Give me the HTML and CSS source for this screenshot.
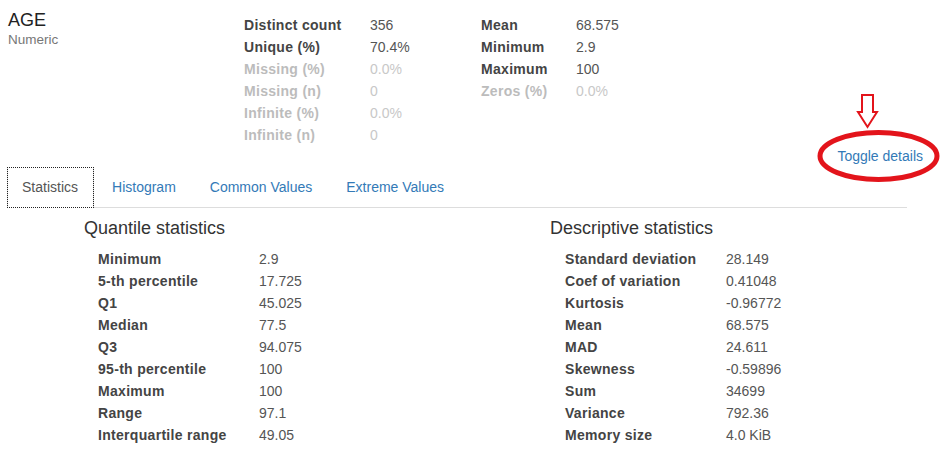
FILE: index.html
```html
<!DOCTYPE html>
<html>
<head>
<meta charset="utf-8">
<link rel="stylesheet" href="styles.css">
</head>
<body>
<div class="page">
  <div class="header">
    <div class="title">
      <div class="name">AGE</div>
      <div class="type">Numeric</div>
    </div>
    <table class="stats stats-a">
      <tr><th>Distinct count</th><td>356</td></tr>
      <tr><th>Unique (%)</th><td>70.4%</td></tr>
      <tr class="ignore"><th>Missing (%)</th><td>0.0%</td></tr>
      <tr class="ignore"><th>Missing (n)</th><td>0</td></tr>
      <tr class="ignore"><th>Infinite (%)</th><td>0.0%</td></tr>
      <tr class="ignore"><th>Infinite (n)</th><td>0</td></tr>
    </table>
    <table class="stats stats-b">
      <tr><th>Mean</th><td>68.575</td></tr>
      <tr><th>Minimum</th><td>2.9</td></tr>
      <tr><th>Maximum</th><td>100</td></tr>
      <tr class="ignore"><th>Zeros (%)</th><td>0.0%</td></tr>
    </table>
  </div>
  <div class="toggle-row"><a class="toggle" href="#">Toggle details</a></div>
  <ul class="tabs">
    <li class="tab active">Statistics</li>
    <li class="tab">Histogram</li>
    <li class="tab">Common Values</li>
    <li class="tab">Extreme Values</li>
  </ul>
  <div class="content">
    <div class="col col-left">
      <h4>Quantile statistics</h4>
      <table class="stats detail">
        <tr><th>Minimum</th><td>2.9</td></tr>
        <tr><th>5-th percentile</th><td>17.725</td></tr>
        <tr><th>Q1</th><td>45.025</td></tr>
        <tr><th>Median</th><td>77.5</td></tr>
        <tr><th>Q3</th><td>94.075</td></tr>
        <tr><th>95-th percentile</th><td>100</td></tr>
        <tr><th>Maximum</th><td>100</td></tr>
        <tr><th>Range</th><td>97.1</td></tr>
        <tr><th>Interquartile range</th><td>49.05</td></tr>
      </table>
    </div>
    <div class="col col-right">
      <h4>Descriptive statistics</h4>
      <table class="stats detail">
        <tr><th>Standard deviation</th><td>28.149</td></tr>
        <tr><th>Coef of variation</th><td>0.41048</td></tr>
        <tr><th>Kurtosis</th><td>-0.96772</td></tr>
        <tr><th>Mean</th><td>68.575</td></tr>
        <tr><th>MAD</th><td>24.611</td></tr>
        <tr><th>Skewness</th><td>-0.59896</td></tr>
        <tr><th>Sum</th><td>34699</td></tr>
        <tr><th>Variance</th><td>792.36</td></tr>
        <tr><th>Memory size</th><td>4.0 KiB</td></tr>
      </table>
    </div>
  </div>
</div>
<svg class="annotation" width="946" height="458" viewBox="0 0 946 458">
  <path d="M862 95 H873 V112 H877 L867.5 127 L858 112 H862 Z" fill="none" stroke="#e3141b" stroke-width="2" stroke-linejoin="miter"/>
  <ellipse cx="878.5" cy="156" rx="58.5" ry="23.5" fill="none" stroke="#e3141b" stroke-width="5"/>
</svg>
</body>
</html>
```
FILE: styles.css
```css
html, body {
  margin: 0;
  padding: 0;
  background: #fff;
}
body {
  font-family: "Liberation Sans", Arial, sans-serif;
  font-size: 14px;
  line-height: 20px;
  color: #333;
  position: relative;
  width: 946px;
  height: 458px;
  overflow: hidden;
}
.page {
  padding-left: 7px;
}
.header {
  display: flex;
  align-items: flex-start;
  height: 146px;
}
.title {
  width: 236px;
  padding-left: 1px;
  padding-top: 10px;
}
.name {
  font-size: 18px;
  line-height: 20px;
  color: #222;
}
.type {
  font-size: 13.5px;
  line-height: 18px;
  margin-top: 1px;
  color: #777;
}
table.stats {
  border-collapse: collapse;
}
.stats th, .stats td {
  padding: 0;
  height: 22px;
  line-height: 22px;
  text-align: left;
  vertical-align: middle;
  white-space: nowrap;
}
.stats th {
  font-weight: bold;
  color: #444;
  letter-spacing: 0.3px;
}
.stats td {
  color: #555;
}
.stats tr.ignore th {
  color: #bcbcbc;
}
.stats tr.ignore td {
  color: #c8c8c8;
}
.stats-a {
  margin-top: 14px;
  width: 237px;
}
.stats-a th { width: 126px; }
.stats-b {
  margin-top: 14px;
}
.stats-b th { width: 95px; }
.toggle-row {
  height: 20px;
  text-align: right;
  padding-right: 23px;
}
.toggle {
  color: #337ab7;
  text-decoration: none;
}
.tabs {
  list-style: none;
  margin: 1px 0 0 0;
  padding: 0;
  display: flex;
  width: 900px;
  border-bottom: 1px solid #ddd;
}
.tab {
  padding: 10px 15px;
  line-height: 20px;
  margin-right: 2px;
  margin-bottom: -1px;
  border: 1px solid transparent;
  border-top: 0;
  color: #337ab7;
}
.tab.active {
  color: #555;
  border-color: #ddd;
  border-bottom-color: #fff;
  outline: 1px dotted #222;
  outline-offset: -1px;
  padding-left: 14px;
}
.content {
  display: flex;
  padding-top: 10px;
}
.col-left {
  width: 543px;
  padding-left: 77px;
  box-sizing: border-box;
}
.col-right {
  padding-left: 0;
}
h4 {
  margin: 0 0 10px 0;
  font-size: 18px;
  line-height: 20px;
  font-weight: normal;
  color: #333;
}
.col-left .detail {
  margin-left: 14px;
}
.col-right .detail {
  margin-left: 15px;
}
.detail th {
  width: 161px;
}
.annotation {
  position: absolute;
  left: 0;
  top: 0;
  pointer-events: none;
}
```
